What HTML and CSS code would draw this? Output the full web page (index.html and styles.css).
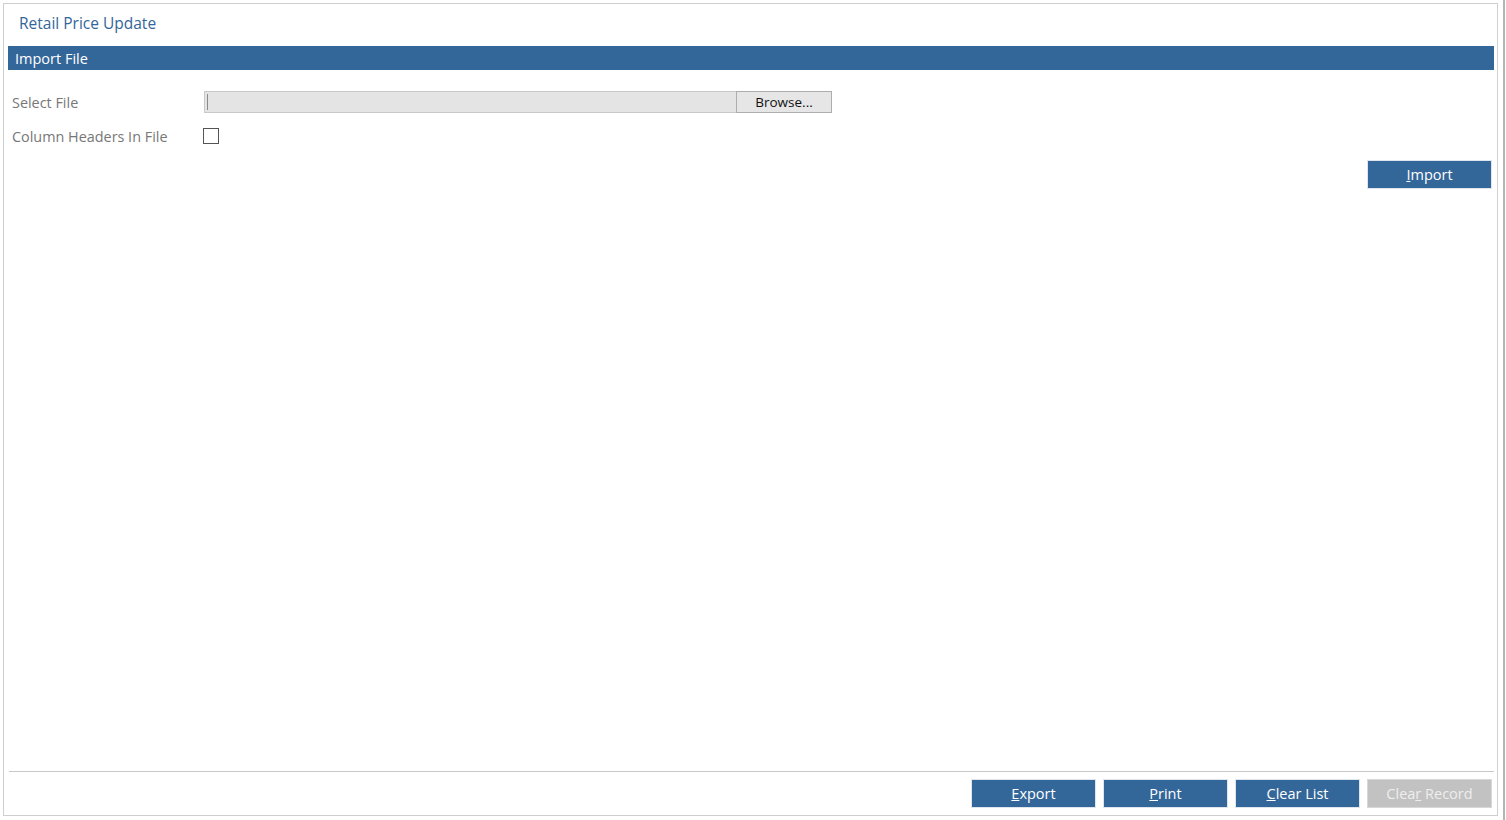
FILE: index.html
```html
<!DOCTYPE html>
<html>
<head>
    <meta charset="UTF-8">
    <title>Retail Price Update</title>
    <link rel="stylesheet" href="styles.css">
</head>
<body>
    <div class="frame">
        <div class="page-title">Retail Price Update</div>
        <div class="content">
            <div class="section-bar">Import File</div>
            <div class="form">
                <div class="form-row">
                    <label class="field-label">Select File</label>
                    <div class="file-picker">
                        <div class="file-path"><span class="caret"></span></div>
                        <button class="browse-btn">Browse...</button>
                    </div>
                </div>
                <div class="form-row">
                    <label class="field-label">Column Headers In File</label>
                    <span class="check-box"></span>
                </div>
            </div>
            <div class="import-row">
                <button class="btn"><u>I</u>mport</button>
            </div>
            <div class="spacer"></div>
            <div class="footer">
                <button class="btn"><u>E</u>xport</button>
                <button class="btn"><u>P</u>rint</button>
                <button class="btn"><u>C</u>lear List</button>
                <button class="btn disabled">Clea<u>r</u> Record</button>
            </div>
        </div>
    </div>
    <div class="edge"></div>
</body>
</html>
```

FILE: styles.css
```css
body {
    margin: 0;
    padding: 0;
    height: 820px;
    overflow: hidden;
    display: flex;
    background-color: #ffffff;
    font-family: 'Open Sans', 'Noto Sans', sans-serif;
}

.frame {
    width: 1493px;
    margin: 3px 0 4px 3px;
    border: 1px solid #cfcfcf;
    display: flex;
    flex-direction: column;
}

.edge {
    width: 2px;
    margin-left: 5px;
    background-color: #b4b4b4;
}

.page-title {
    padding: 7px 0 0 15px;
    height: 35px;
    line-height: 24px;
    font-size: 15.5px;
    color: #336699;
}

.content {
    flex: 1;
    display: flex;
    flex-direction: column;
    padding: 0 3px 7px 4px;
}

.section-bar {
    height: 24px;
    line-height: 25px;
    padding-left: 7px;
    background-color: #336699;
    color: white;
    font-size: 14.5px;
}

.form {
    padding: 21px 0 0 4px;
}

.form-row {
    display: flex;
    align-items: center;
    height: 22px;
    margin-bottom: 12px;
}

.field-label {
    width: 192px;
    font-size: 14.4px;
    color: #777777;
}

.file-picker {
    display: flex;
}

.file-path {
    width: 531px;
    height: 20px;
    background-color: #e4e4e4;
    border: 1px solid #c9c9c9;
    border-right: none;
    display: flex;
    align-items: center;
}

.caret {
    width: 1px;
    height: 16px;
    margin-left: 2px;
    background-color: #8a8a8a;
}

.browse-btn {
    box-sizing: border-box;
    width: 96px;
    height: 22px;
    padding: 0;
    border: 1px solid #adadad;
    background-color: #e6e6e6;
    font-family: 'Open Sans', 'Noto Sans', sans-serif;
    font-size: 13.5px;
    color: #111;
}

.check-box {
    width: 14px;
    height: 14px;
    margin-left: -1px;
    border: 1px solid #555;
    background-color: #fff;
}

.import-row {
    display: flex;
    justify-content: flex-end;
    padding: 1px 2px 0 0;
}

.btn {
    box-sizing: border-box;
    width: 125px;
    height: 29px;
    padding: 0;
    border: 1px solid #dfe5ed;
    background-color: #336699;
    color: white;
    font-family: 'Open Sans', 'Noto Sans', sans-serif;
    font-size: 14.5px;
}

.btn.disabled {
    background-color: #c2c2c2;
    border-color: #d8d8d8;
    color: #eeeeee;
}

.spacer {
    flex: 1;
}

.footer {
    display: flex;
    justify-content: flex-end;
    gap: 7px;
    margin-left: 1px;
    padding: 7px 2px 0 0;
    border-top: 1px solid #c8c8c8;
}
```
